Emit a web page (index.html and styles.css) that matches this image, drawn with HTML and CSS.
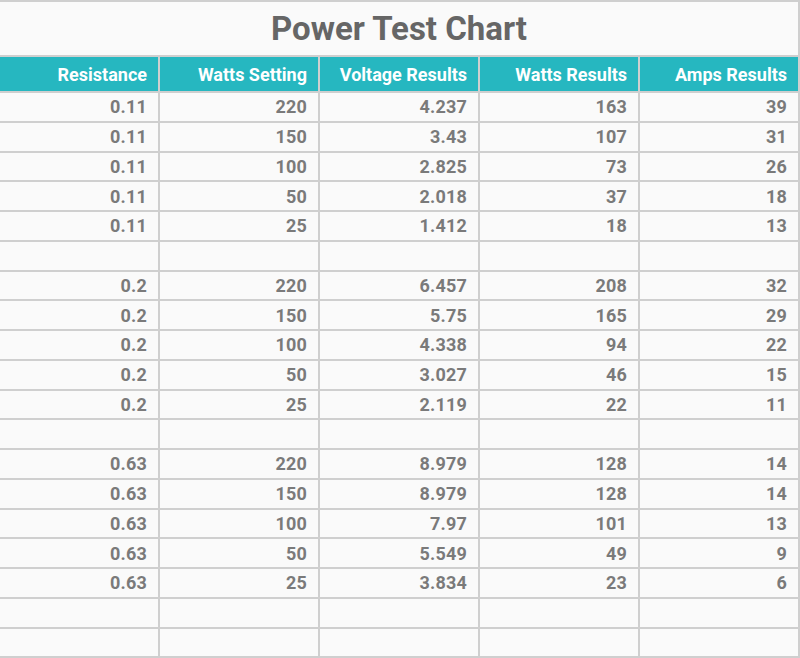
FILE: index.html
```html
<!DOCTYPE html>
<html>
<head>
<meta charset="utf-8">
<link rel="stylesheet" href="styles.css">
</head>
<body>
<table class="chart">
  <tr><th class="title" colspan="5">Power Test Chart</th></tr>
  <tr class="head"><th>Resistance</th><th>Watts Setting</th><th>Voltage Results</th><th>Watts Results</th><th>Amps Results</th></tr>
  <tr><td>0.11</td><td>220</td><td>4.237</td><td>163</td><td>39</td></tr>
  <tr><td>0.11</td><td>150</td><td>3.43</td><td>107</td><td>31</td></tr>
  <tr><td>0.11</td><td>100</td><td>2.825</td><td>73</td><td>26</td></tr>
  <tr><td>0.11</td><td>50</td><td>2.018</td><td>37</td><td>18</td></tr>
  <tr><td>0.11</td><td>25</td><td>1.412</td><td>18</td><td>13</td></tr>
  <tr><td></td><td></td><td></td><td></td><td></td></tr>
  <tr><td>0.2</td><td>220</td><td>6.457</td><td>208</td><td>32</td></tr>
  <tr><td>0.2</td><td>150</td><td>5.75</td><td>165</td><td>29</td></tr>
  <tr><td>0.2</td><td>100</td><td>4.338</td><td>94</td><td>22</td></tr>
  <tr><td>0.2</td><td>50</td><td>3.027</td><td>46</td><td>15</td></tr>
  <tr><td>0.2</td><td>25</td><td>2.119</td><td>22</td><td>11</td></tr>
  <tr><td></td><td></td><td></td><td></td><td></td></tr>
  <tr><td>0.63</td><td>220</td><td>8.979</td><td>128</td><td>14</td></tr>
  <tr><td>0.63</td><td>150</td><td>8.979</td><td>128</td><td>14</td></tr>
  <tr><td>0.63</td><td>100</td><td>7.97</td><td>101</td><td>13</td></tr>
  <tr><td>0.63</td><td>50</td><td>5.549</td><td>49</td><td>9</td></tr>
  <tr><td>0.63</td><td>25</td><td>3.834</td><td>23</td><td>6</td></tr>
  <tr><td></td><td></td><td></td><td></td><td></td></tr>
  <tr><td></td><td></td><td></td><td></td><td></td></tr>
</table>
</body>
</html>
```

FILE: styles.css
```css
html, body {
  margin: 0;
  padding: 0;
  background: #fafafa;
  overflow: hidden;
}
.chart {
  border-collapse: collapse;
  table-layout: fixed;
  width: 802px;
  margin-left: -2px;
  font-family: Roboto, "Liberation Sans", sans-serif;
  font-weight: 700;
}
.chart th, .chart td {
  border: 2px solid #cfcfcf;
  width: 160px;
  box-sizing: border-box;
  text-align: right;
  padding: 0 11px 0 0;
}
.chart td {
  height: 29.75px;
  font-size: 18px;
  letter-spacing: 0.2px;
  color: #7a7a7a;
  background: #fafafa;
}
.chart .title {
  height: 55px;
  text-align: center;
  padding: 0;
  font-size: 33px;
  color: #666666;
  background: #fafafa;
}
.chart .head th {
  height: 36px;
  background: #26b7c0;
  color: #ffffff;
  font-size: 18px;
  font-weight: 700;
}
```
